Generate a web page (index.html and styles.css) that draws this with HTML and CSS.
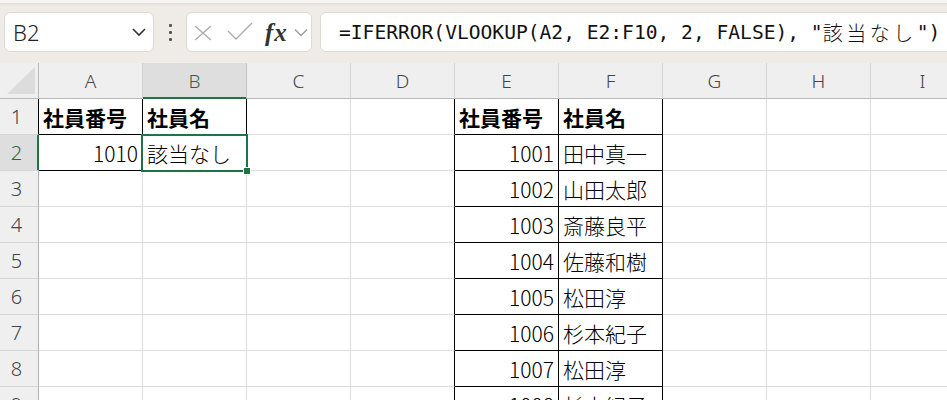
FILE: index.html
```html
<!DOCTYPE html>
<html lang="ja">
<head>
<meta charset="utf-8">
<title>Sheet</title>
<link rel="stylesheet" href="styles.css">
</head>
<body>
<div class="app">
  <div class="toolbar">
    <div class="namebox">
      <span class="ref">B2</span>
      <svg class="nb-chev" width="16" height="10" viewBox="0 0 16 10"><path d="M2 2 L8 8 L14 2" stroke="#333" stroke-width="1.6" fill="none"/></svg>
    </div>
    <div class="dots"><i></i><i></i><i></i></div>
    <div class="fxbox">
      <svg class="ic-x" width="18" height="16" viewBox="0 0 18 16"><path d="M1 1 L17 15 M17 1 L1 15" stroke="#ababab" stroke-width="1.3" fill="none"/></svg>
      <svg class="ic-ok" width="26" height="18" viewBox="0 0 26 18"><path d="M1 9 L9 17 L25 1" stroke="#ababab" stroke-width="1.3" fill="none"/></svg>
      <span class="fx">fx</span>
      <svg class="ic-dd" width="14" height="9" viewBox="0 0 14 9"><path d="M1 1.5 L7 7.5 L13 1.5" stroke="#9a9a9a" stroke-width="1.3" fill="none"/></svg>
    </div>
    <div class="formula">=IFERROR(VLOOKUP(A2, E2:F10, 2, FALSE), "<span class="cjk">該当なし</span>")</div>
  </div>

  <div class="sheet">
    <div class="corner"><span class="tri"></span></div>
    <div class="ch">A</div><div class="ch sel">B</div><div class="ch">C</div><div class="ch">D</div><div class="ch">E</div><div class="ch">F</div><div class="ch">G</div><div class="ch">H</div><div class="ch">I</div>

    <div class="rh blk">1</div>
    <div class="c bk b">社員番号</div><div class="c bk b">社員名</div><div class="c"></div><div class="c br"></div><div class="c bk b">社員番号</div><div class="c bk b">社員名</div><div class="c"></div><div class="c"></div><div class="c"></div>

    <div class="rh sel">2</div>
    <div class="c bk num">1010</div><div class="c bk">該当なし</div><div class="c"></div><div class="c br"></div><div class="c bk num">1001</div><div class="c bk">田中真一</div><div class="c"></div><div class="c"></div><div class="c"></div>

    <div class="rh">3</div>
    <div class="c"></div><div class="c"></div><div class="c"></div><div class="c br"></div><div class="c bk num">1002</div><div class="c bk">山田太郎</div><div class="c"></div><div class="c"></div><div class="c"></div>

    <div class="rh">4</div>
    <div class="c"></div><div class="c"></div><div class="c"></div><div class="c br"></div><div class="c bk num">1003</div><div class="c bk">斎藤良平</div><div class="c"></div><div class="c"></div><div class="c"></div>

    <div class="rh">5</div>
    <div class="c"></div><div class="c"></div><div class="c"></div><div class="c br"></div><div class="c bk num">1004</div><div class="c bk">佐藤和樹</div><div class="c"></div><div class="c"></div><div class="c"></div>

    <div class="rh">6</div>
    <div class="c"></div><div class="c"></div><div class="c"></div><div class="c br"></div><div class="c bk num">1005</div><div class="c bk">松田淳</div><div class="c"></div><div class="c"></div><div class="c"></div>

    <div class="rh">7</div>
    <div class="c"></div><div class="c"></div><div class="c"></div><div class="c br"></div><div class="c bk num">1006</div><div class="c bk">杉本紀子</div><div class="c"></div><div class="c"></div><div class="c"></div>

    <div class="rh">8</div>
    <div class="c"></div><div class="c"></div><div class="c"></div><div class="c br"></div><div class="c bk num">1007</div><div class="c bk">松田淳</div><div class="c"></div><div class="c"></div><div class="c"></div>

    <div class="rh">9</div>
    <div class="c"></div><div class="c"></div><div class="c"></div><div class="c br"></div><div class="c bk num">1008</div><div class="c bk">杉本紀子</div><div class="c"></div><div class="c"></div><div class="c"></div>

    <div class="selection"><span class="handle"></span></div>
  </div>
</div>
</body>
</html>
```

FILE: styles.css
```css
html, body {
  margin: 0;
  padding: 0;
  background: #ffffff;
  overflow: hidden;
}
.app {
  width: 947px;
  height: 400px;
  overflow: hidden;
  font-family: "Noto Sans", "Noto Sans CJK JP", sans-serif;
}
.toolbar {
  height: 63px;
  box-sizing: border-box;
  background: #efebe7;
  border-top: 3px solid #f7f5f3;
  box-shadow: inset 0 4px 3px -3px rgba(0,0,0,0.08);
  display: flex;
  align-items: flex-start;
  padding: 9px 0 0 4px;
}
.namebox {
  width: 150px;
  height: 40px;
  box-sizing: border-box;
  background: #fff;
  border: 1px solid #dcd8d4;
  border-radius: 6px;
  display: flex;
  align-items: center;
  justify-content: space-between;
  padding: 0 6px 0 8px;
}
.ref {
  font-family: "Noto Sans", sans-serif;
  font-size: 22px;
  font-weight: 300;
  color: #222;
  line-height: 1;
}
.nb-chev { display: block; }
.dots {
  width: 32px;
  height: 40px;
  display: flex;
  flex-direction: column;
  align-items: center;
  justify-content: center;
  gap: 4px;
}
.dots i {
  display: block;
  width: 3px;
  height: 3px;
  background: #555;
  border-radius: 1px;
}
.fxbox {
  width: 126px;
  height: 40px;
  box-sizing: border-box;
  background: #fff;
  border: 1px solid #dcd8d4;
  border-radius: 6px;
  display: flex;
  align-items: center;
  padding-left: 7px;
}
.ic-x { display: block; margin-top: 2px; }
.ic-ok { display: block; margin-left: 15px; margin-top: -2px; }
.fx {
  margin-left: 12px;
  font-family: "Liberation Serif", serif;
  font-style: italic;
  font-weight: bold;
  font-size: 25px;
  letter-spacing: 1px;
  color: #333;
  line-height: 1;
}
.ic-dd { display: block; margin-left: 6px; }
.formula {
  flex: 1;
  height: 40px;
  margin-left: 8px;
  margin-right: -12px;
  box-sizing: border-box;
  background: #fff;
  border: 1px solid #dcd8d4;
  border-radius: 6px;
  padding-left: 18px;
  display: flex;
  align-items: center;
  font-family: "DejaVu Sans Mono", "Noto Sans CJK JP", monospace;
  font-size: 19.6px;
  color: #111;
  white-space: nowrap;
}
.cjk {
  font-family: "Noto Sans CJK JP", sans-serif;
  font-size: 20px;
  font-weight: 300;
  letter-spacing: 3.5px;
}

.sheet {
  position: relative;
  display: grid;
  grid-template-columns: 39px repeat(9, 104px);
  grid-auto-rows: 36px;
}
.corner {
  background: #efefef;
  border-right: 1px solid #b9b9b9;
  border-bottom: 1px solid #b9b9b9;
  position: relative;
}
.tri {
  position: absolute;
  left: 7px;
  top: 4px;
  width: 28px;
  height: 27px;
  background: #dcdcdc;
  clip-path: polygon(100% 0, 100% 100%, 0 100%);
}
.ch {
  background: #efefef;
  border-right: 1px solid #d2d2d2;
  border-bottom: 1px solid #b9b9b9;
  display: flex;
  align-items: center;
  justify-content: center;
  font-size: 19px;
  font-weight: 300;
  color: #444;
}
.ch.sel {
  background: #dedede;
  color: #1e6b41;
  border-bottom-color: #217346;
  box-shadow: inset 0 -1px 0 #217346;
  border-right-color: #c6c6c6;
}
.rh {
  background: #efefef;
  border-right: 1px solid #b0b0b0;
  border-bottom: 1px solid #d6d6d6;
  display: flex;
  align-items: center;
  justify-content: center;
  padding-right: 5px;
  font-size: 20px;
  font-weight: 300;
  color: #444;
}
.rh.blk { border-right-color: #000; }
.rh.sel {
  background: #dedede;
  color: #1e6b41;
  border-right-color: #217346;
  box-shadow: inset -1px 0 0 #217346;
}
.c {
  border-right: 1px solid #dcdcdc;
  border-bottom: 1px solid #dcdcdc;
  display: flex;
  align-items: center;
  padding: 1px 4px 0 4px;
  font-family: "Noto Sans CJK JP", sans-serif;
  font-size: 21px;
  font-weight: 300;
  color: #000;
  white-space: nowrap;
  overflow: hidden;
}
.c.bk { border-right-color: #000; border-bottom-color: #000; }
.c.br { border-right-color: #000; }
.c.b { font-weight: bold; font-size: 21px; padding-left: 4px; }
.c.num { justify-content: flex-end; }

.selection {
  position: absolute;
  left: 141px;
  top: 71px;
  width: 107px;
  height: 38px;
  box-sizing: border-box;
  border: 2px solid #217346;
}
.handle {
  position: absolute;
  right: -5px;
  bottom: -5px;
  width: 6px;
  height: 6px;
  background: #217346;
  border: 1px solid #fff;
}
```
